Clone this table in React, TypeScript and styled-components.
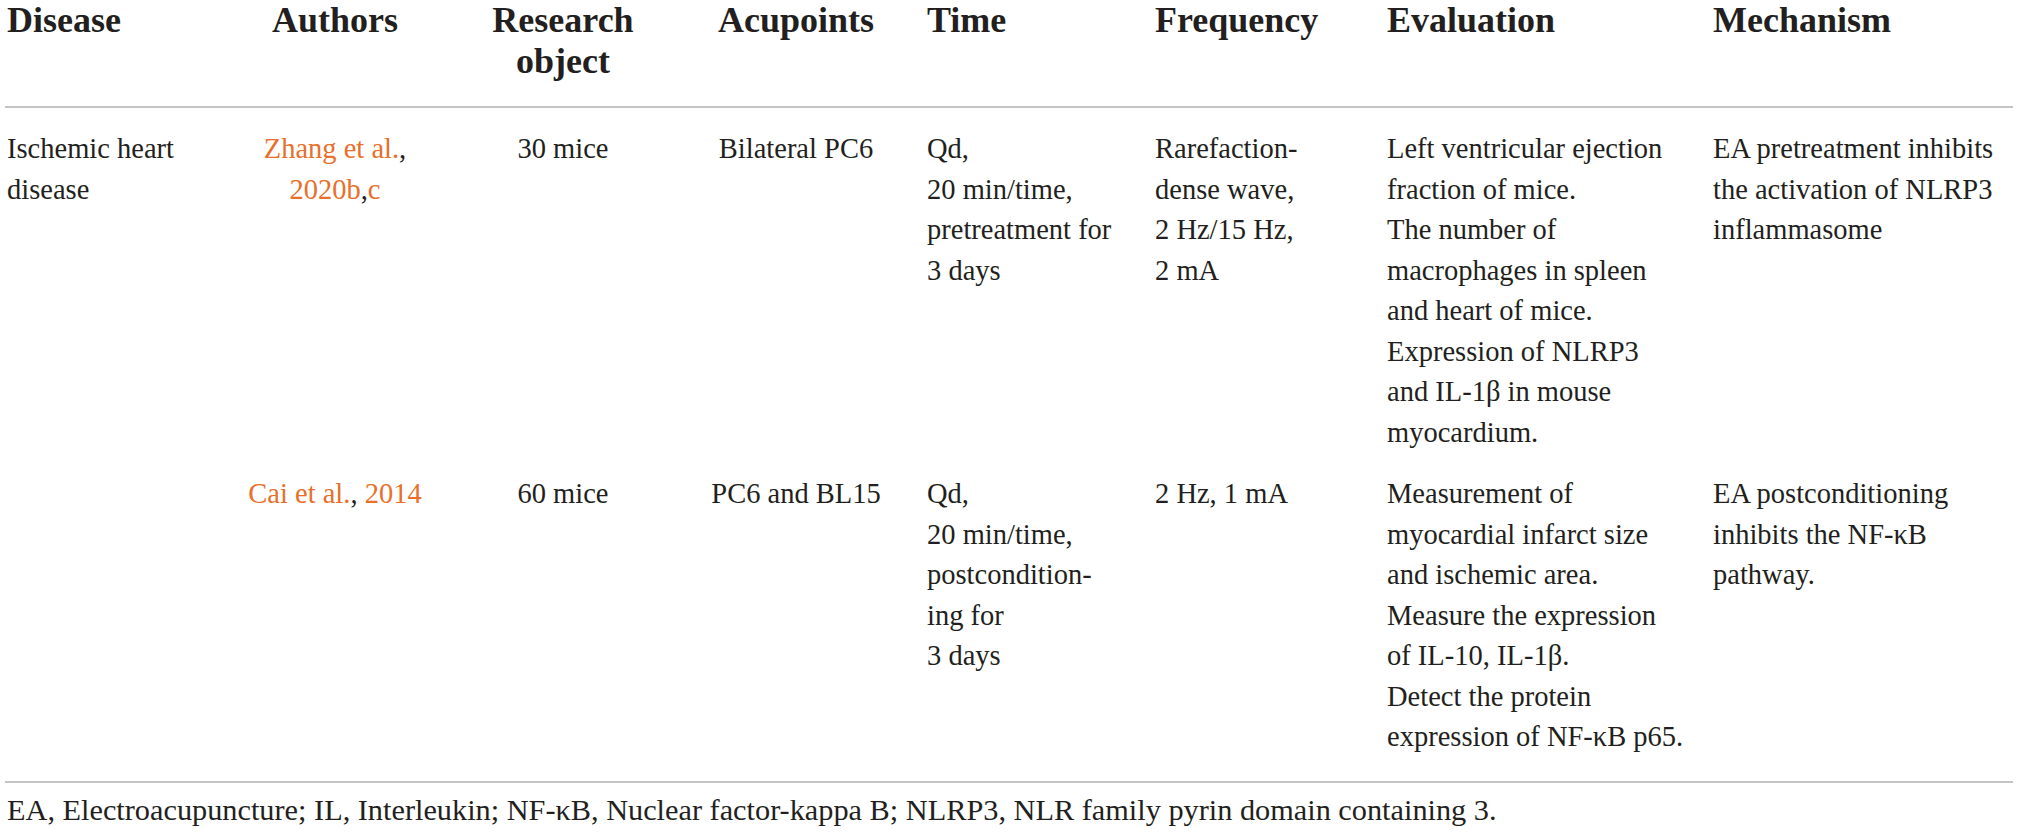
import React from 'react';
import styled, { createGlobalStyle } from 'styled-components';

const GlobalStyle = createGlobalStyle`
  html, body {
    margin: 0;
    padding: 0;
    background: #ffffff;
  }
  body {
    font-family: 'Liberation Serif', 'Times New Roman', serif;
    color: #231f20;
  }
`;

const COLS = '215px 230px 226px 240px 228px 232px 326px 311px';

type Align = 'left' | 'center';

const columns: { title: string[]; align: Align; pad: number }[] = [
  { title: ['Disease'], align: 'left', pad: 2 },
  { title: ['Authors'], align: 'center', pad: 0 },
  { title: ['Research', 'object'], align: 'center', pad: 0 },
  { title: ['Acupoints'], align: 'center', pad: 0 },
  { title: ['Time'], align: 'left', pad: 11 },
  { title: ['Frequency'], align: 'left', pad: 11 },
  { title: ['Evaluation'], align: 'left', pad: 11 },
  { title: ['Mechanism'], align: 'left', pad: 11 },
];

// a line is either plain text or a list of parts, some of them links
type Part = { text: string; link?: boolean };
type Line = string | Part[];

const rows: Line[][][] = [
  [
    ['Ischemic heart', 'disease'],
    [
      [{ text: 'Zhang et al.', link: true }, { text: ',' }],
      [{ text: '2020b', link: true }, { text: ',' }, { text: 'c', link: true }],
    ],
    ['30 mice'],
    ['Bilateral PC6'],
    ['Qd,', '20 min/time,', 'pretreatment for', '3 days'],
    ['Rarefaction-', 'dense wave,', '2 Hz/15 Hz,', '2 mA'],
    [
      'Left ventricular ejection',
      'fraction of mice.',
      'The number of',
      'macrophages in spleen',
      'and heart of mice.',
      'Expression of NLRP3',
      'and IL-1β in mouse',
      'myocardium.',
    ],
    ['EA pretreatment inhibits', 'the activation of NLRP3', 'inflammasome'],
  ],
  [
    [],
    [[{ text: 'Cai et al.', link: true }, { text: ', ' }, { text: '2014', link: true }]],
    ['60 mice'],
    ['PC6 and BL15'],
    ['Qd,', '20 min/time,', 'postcondition-', 'ing for', '3 days'],
    ['2 Hz, 1 mA'],
    [
      'Measurement of',
      'myocardial infarct size',
      'and ischemic area.',
      'Measure the expression',
      'of IL-10, IL-1β.',
      'Detect the protein',
      'expression of NF-κB p65.',
    ],
    ['EA postconditioning', 'inhibits the NF-κB', 'pathway.'],
  ],
];

const footnote =
  'EA, Electroacupuncture; IL, Interleukin; NF-κB, Nuclear factor-kappa B; NLRP3, NLR family pyrin domain containing 3.';

const App = () => {
  return (
    <>
      <GlobalStyle />
      <Page>
        <HeadRow>
          {columns.map((c, i) => (
            <HeadCell key={i} $align={c.align} $pad={c.pad}>
              {c.title.map((t) => (
                <TextLine key={t}>{t}</TextLine>
              ))}
            </HeadCell>
          ))}
        </HeadRow>
        <Body>
          {rows.map((row, r) => (
            <BodyRow key={r}>
              {row.map((cell, i) => (
                <Cell key={i} $align={columns[i].align} $pad={columns[i].pad}>
                  {cell.map((line, j) => (
                    <TextLine key={j}>
                      {typeof line === 'string'
                        ? line
                        : line.map((p, k) =>
                            p.link ? <Ref key={k}>{p.text}</Ref> : <span key={k}>{p.text}</span>
                          )}
                    </TextLine>
                  ))}
                </Cell>
              ))}
            </BodyRow>
          ))}
        </Body>
        <Footer>{footnote}</Footer>
      </Page>
    </>
  );
};

export default App;

const Page = styled.div`
  width: 2008px;
  margin-left: 5px;
`;

const HeadRow = styled.div`
  display: grid;
  grid-template-columns: ${COLS};
  padding-bottom: 24px;
  border-bottom: 2px solid #c4c4c4;
`;

const HeadCell = styled.div<{ $align: Align; $pad: number }>`
  text-align: ${(p) => p.$align};
  padding-left: ${(p) => p.$pad}px;
  font-size: 36px;
  font-weight: 700;
  line-height: 41px;
  color: #231f20;
`;

const Body = styled.div`
  padding: 0 0 23px;
  border-bottom: 2px solid #c4c4c4;
`;

const BodyRow = styled.div`
  display: grid;
  grid-template-columns: ${COLS};
  padding-top: 21px;
`;

const Cell = styled.div<{ $align: Align; $pad: number }>`
  text-align: ${(p) => p.$align};
  padding-left: ${(p) => p.$pad}px;
  font-size: 28.5px;
  line-height: 40.5px;
`;

const TextLine = styled.div`
  white-space: nowrap;
`;

const Ref = styled.span`
  color: #e8702a;
`;

const Footer = styled.div`
  padding: 7px 0 0 2px;
  font-size: 30.3px;
  line-height: 40.5px;
  white-space: nowrap;
`;
